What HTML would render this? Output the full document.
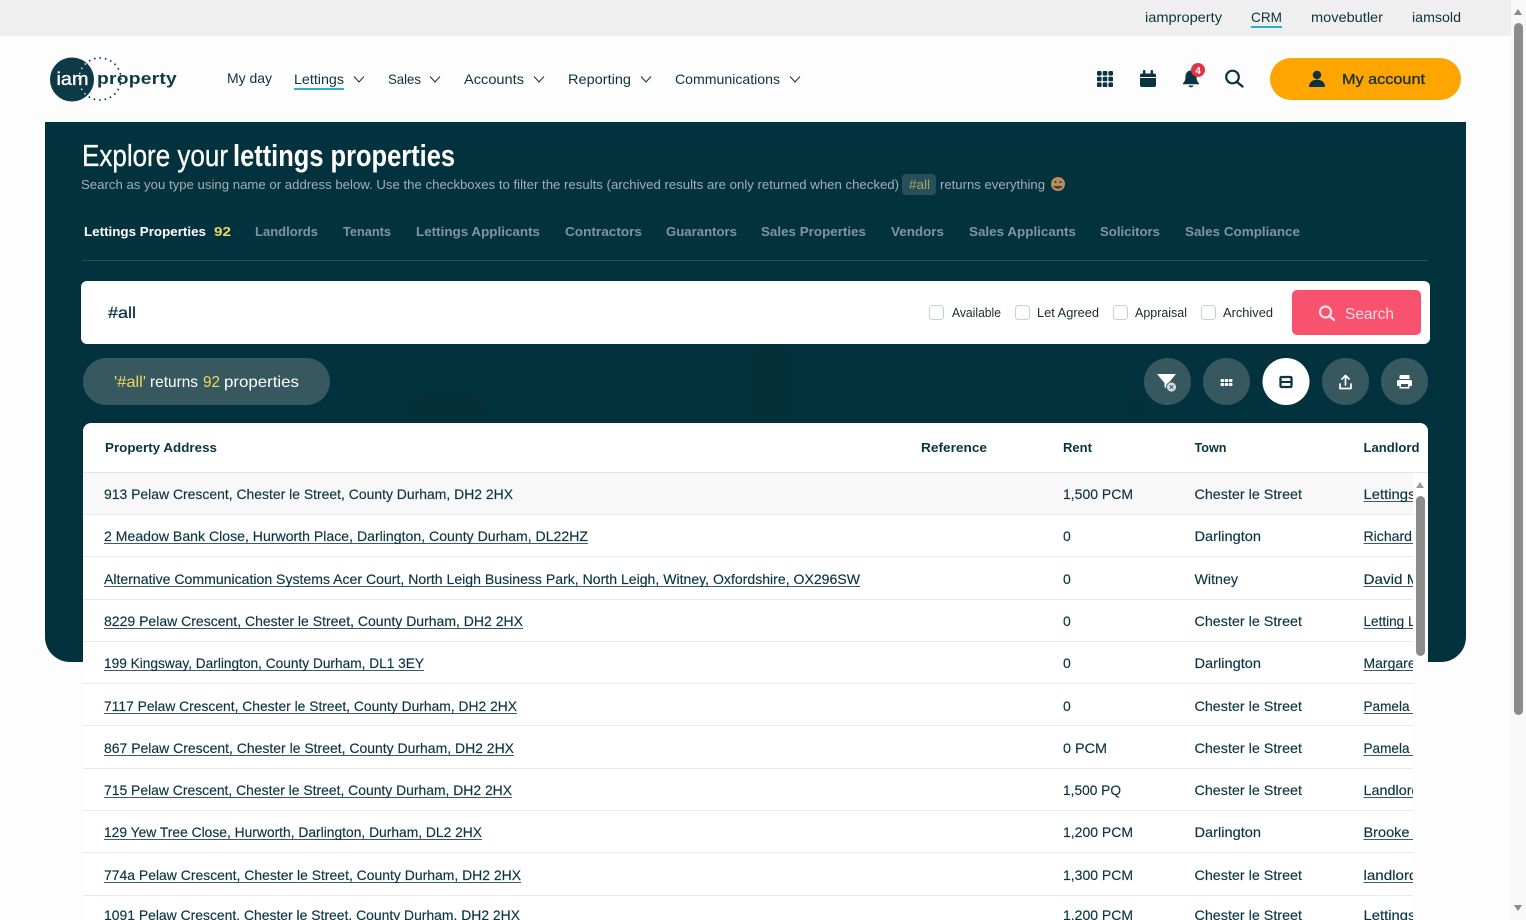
<!DOCTYPE html>
<html lang="en"><head><meta charset="utf-8"><title>Explore your lettings properties</title>
<style>
html,body{margin:0;padding:0;width:1526px;height:920px;overflow:hidden;background:#fdfdfd}
svg{display:block;position:absolute;left:0;top:0}
text{font-family:"Liberation Sans",sans-serif;fill:#0b3440}
.n{font-size:14px}
.t{font-size:13px;font-weight:bold;fill:#7e979e}
.h{font-size:13px;font-weight:bold}
.c{font-size:14px;stroke:#0b3440;stroke-width:.15px}
</style></head><body>
<svg width="1526" height="920" viewBox="0 0 1526 920" xmlns="http://www.w3.org/2000/svg">
<defs><clipPath id="cl"><rect x="83" y="473" width="1330" height="447"/></clipPath>
<clipPath id="lg"><circle cx="72" cy="79.500" r="22"/></clipPath></defs>
<rect x="0" y="0" width="1511" height="36" fill="#efefef"/>
<rect x="1511" y="0" width="15" height="920" fill="#f8f8f8"/>
<rect x="1514" y="23" width="9" height="692" rx="4.500" fill="#8c8c8c"/>
<path d="M1514 15l4-6 4 6z" fill="#8c8c8c"/><path d="M1514 905l4 6 4-6z" fill="#8c8c8c"/>

<text class="n" x="1145" y="22" textLength="77" lengthAdjust="spacingAndGlyphs">iamproperty</text>
<text class="n" x="1251" y="22" textLength="31" lengthAdjust="spacingAndGlyphs">CRM</text>
<rect x="1251" y="26" width="31" height="2" fill="#2ab0c8"/>
<text class="n" x="1311" y="22" textLength="72" lengthAdjust="spacingAndGlyphs">movebutler</text>
<text class="n" x="1412" y="22" textLength="49" lengthAdjust="spacingAndGlyphs">iamsold</text>

<!-- logo -->
<circle cx="100" cy="79" r="21" fill="none" stroke="#0d3a47" stroke-width="1.800" stroke-linecap="round" stroke-dasharray="0.1 5.400"/>
<circle cx="72" cy="79.500" r="22" fill="#0d3a47"/>
<circle cx="100" cy="79" r="21" fill="none" stroke="#fff" stroke-width="1.500" stroke-linecap="round" stroke-dasharray="0.1 5.400" clip-path="url(#lg)"/>
<text x="56.500" y="85" font-size="18" style="fill:#fff;stroke:#fff;stroke-width:.35px" textLength="32" lengthAdjust="spacingAndGlyphs">iam</text>
<text x="97" y="84" font-size="17" font-weight="bold" style="fill:#0d3a47;letter-spacing:.2px" textLength="80" lengthAdjust="spacingAndGlyphs">property</text>

<!-- nav -->
<text class="n" x="227" y="83" textLength="45" lengthAdjust="spacingAndGlyphs">My day</text>
<text class="n" x="294" y="84" textLength="50" lengthAdjust="spacingAndGlyphs">Lettings</text>
<rect x="294" y="88" width="50" height="2" fill="#2ab0c8"/>
<text class="n" x="388" y="84" textLength="33" lengthAdjust="spacingAndGlyphs">Sales</text>
<text class="n" x="464" y="84" textLength="60" lengthAdjust="spacingAndGlyphs">Accounts</text>
<text class="n" x="568" y="84" textLength="63" lengthAdjust="spacingAndGlyphs">Reporting</text>
<text class="n" x="675" y="84" textLength="105" lengthAdjust="spacingAndGlyphs">Communications</text>
<path fill="none" stroke="#0b3440" stroke-width="1" d="M354 76.500l5 5.500 5-5.500M430 76.500l5 5.500 5-5.500M534 76.500l5 5.500 5-5.500M641 76.500l5 5.500 5-5.500M790 76.500l5 5.500 5-5.500"/>

<!-- header icons -->
<g fill="#0b3440">
<rect x="1097" y="71" width="4.600" height="4.600" rx="1.300"/><rect x="1102.700" y="71" width="4.600" height="4.600" rx="1.300"/><rect x="1108.400" y="71" width="4.600" height="4.600" rx="1.300"/>
<rect x="1097" y="76.700" width="4.600" height="4.600" rx="1.300"/><rect x="1102.700" y="76.700" width="4.600" height="4.600" rx="1.300"/><rect x="1108.400" y="76.700" width="4.600" height="4.600" rx="1.300"/>
<rect x="1097" y="82.400" width="4.600" height="4.600" rx="1.300"/><rect x="1102.700" y="82.400" width="4.600" height="4.600" rx="1.300"/><rect x="1108.400" y="82.400" width="4.600" height="4.600" rx="1.300"/>
<path d="M1140 75.500a2 2 0 0 1 2-2h12a2 2 0 0 1 2 2v1.500h-16zM1140 78h16v7a2 2 0 0 1-2 2h-12a2 2 0 0 1-2-2z"/>
<rect x="1143" y="70" width="2.400" height="4.500" rx="1"/><rect x="1150.600" y="70" width="2.400" height="4.500" rx="1"/>
<path d="M1191 70.500c3.800 0 5.500 3 5.500 6.500 0 3.500 1.300 5 2.500 6.200v1h-16v-1c1.200-1.200 2.500-2.700 2.500-6.200 0-3.500 1.700-6.500 5.500-6.500zM1188.500 85.500h5a2.500 1.800 0 0 1-5 0z"/>
</g>
<circle cx="1198" cy="70" r="7" fill="#dd3446"/>
<text x="1195.300" y="73.800" font-size="10" font-weight="bold" style="fill:#fff">4</text>
<circle cx="1232.500" cy="77" r="6.300" fill="none" stroke="#0b3440" stroke-width="2.200"/>
<path d="M1237 82l5.500 4.500" stroke="#0b3440" stroke-width="2.400" stroke-linecap="round"/>
<rect x="1270" y="58" width="191" height="42" rx="21" fill="#ffa500"/>
<circle cx="1317" cy="75" r="4.200" fill="#0b3440"/>
<path d="M1309 87c0-5 3.500-7.200 8-7.200s8 2.200 8 7.200z" fill="#0b3440"/>
<text x="1342" y="84" font-size="15" style="fill:#1b3432;stroke:#1b3432;stroke-width:.35px" textLength="83" lengthAdjust="spacingAndGlyphs">My account</text>

<!-- panel -->
<path d="M45 122H1466V637a25 25 0 0 1-25 25H70a25 25 0 0 1-25-25z" fill="#03323f"/>
<path d="M400 423c0-22 20-33 45-33s45 11 45 33zM750 423V350h6v-14h30v14h6v73zM1120 423l15-40 15 40z" fill="#033039"/>

<text x="82" y="166" font-size="31" style="fill:#fff;stroke:#fff;stroke-width:.3px" textLength="146" lengthAdjust="spacingAndGlyphs">Explore your</text>
<text x="233" y="166" font-size="31" font-weight="bold" style="fill:#fff" textLength="222" lengthAdjust="spacingAndGlyphs">lettings properties</text>
<text x="81" y="189" font-size="13" style="fill:#9fb0b6" textLength="818" lengthAdjust="spacingAndGlyphs">Search as you type using name or address below. Use the checkboxes to filter the results (archived results are only returned when checked)</text>
<rect x="902" y="174" width="34" height="21" rx="4" fill="#28505a"/>
<text x="909" y="189" font-size="13" style="fill:#a8a860" textLength="21" lengthAdjust="spacingAndGlyphs">#all</text>
<text x="940" y="189" font-size="13" style="fill:#9fb0b6" textLength="105" lengthAdjust="spacingAndGlyphs">returns everything</text>
<circle cx="1058" cy="184" r="7" fill="#b58e5e"/>
<path d="M1053.500 186c1.500 3.500 7.500 3.500 9 0z" fill="#4d3a26"/><circle cx="1055.500" cy="182" r="1.100" fill="#4d3a26"/><circle cx="1060.500" cy="182" r="1.100" fill="#4d3a26"/>

<text class="t" x="84" y="236" style="fill:#fff" textLength="122" lengthAdjust="spacingAndGlyphs">Lettings Properties</text>
<text class="t" x="214" y="236" style="fill:#f1d55c" textLength="17" lengthAdjust="spacingAndGlyphs">92</text>
<text class="t" x="255" y="236" textLength="63" lengthAdjust="spacingAndGlyphs">Landlords</text>
<text class="t" x="343" y="236" textLength="48" lengthAdjust="spacingAndGlyphs">Tenants</text>
<text class="t" x="416" y="236" textLength="124" lengthAdjust="spacingAndGlyphs">Lettings Applicants</text>
<text class="t" x="565" y="236" textLength="77" lengthAdjust="spacingAndGlyphs">Contractors</text>
<text class="t" x="666" y="236" textLength="71" lengthAdjust="spacingAndGlyphs">Guarantors</text>
<text class="t" x="761" y="236" textLength="105" lengthAdjust="spacingAndGlyphs">Sales Properties</text>
<text class="t" x="891" y="236" textLength="53" lengthAdjust="spacingAndGlyphs">Vendors</text>
<text class="t" x="969" y="236" textLength="107" lengthAdjust="spacingAndGlyphs">Sales Applicants</text>
<text class="t" x="1100" y="236" textLength="60" lengthAdjust="spacingAndGlyphs">Solicitors</text>
<text class="t" x="1185" y="236" textLength="115" lengthAdjust="spacingAndGlyphs">Sales Compliance</text>
<rect x="82" y="260" width="1346" height="1" fill="#28505a"/>

<!-- search -->
<rect x="81" y="281" width="1349" height="63" rx="6" fill="#fff"/>
<text x="108" y="318" font-size="16" textLength="28" lengthAdjust="spacingAndGlyphs" style="stroke:#0b3440;stroke-width:.25px">#all</text>
<g fill="#fff" stroke="#c9cfd2">
<rect x="929.500" y="305.500" width="14" height="14" rx="3"/><rect x="1015.500" y="305.500" width="14" height="14" rx="3"/><rect x="1113.500" y="305.500" width="14" height="14" rx="3"/><rect x="1201.500" y="305.500" width="14" height="14" rx="3"/>
</g>
<text x="952" y="317" font-size="13" style="fill:#1a2b30" textLength="49" lengthAdjust="spacingAndGlyphs">Available</text>
<text x="1037" y="317" font-size="13" style="fill:#1a2b30" textLength="62" lengthAdjust="spacingAndGlyphs">Let Agreed</text>
<text x="1135" y="317" font-size="13" style="fill:#1a2b30" textLength="52" lengthAdjust="spacingAndGlyphs">Appraisal</text>
<text x="1223" y="317" font-size="13" style="fill:#1a2b30" textLength="50" lengthAdjust="spacingAndGlyphs">Archived</text>
<rect x="1292" y="290" width="129" height="45" rx="5" fill="#f8526e"/>
<circle cx="1325.500" cy="312" r="5.500" fill="none" stroke="#ffe3e8" stroke-width="2.200"/>
<path d="M1329.500 316l4.500 4" stroke="#ffe3e8" stroke-width="2.400" stroke-linecap="round"/>
<text x="1345" y="319" font-size="16" style="fill:#ffdbe1" textLength="49" lengthAdjust="spacingAndGlyphs">Search</text>

<!-- pill -->
<rect x="83" y="358" width="247" height="47" rx="23.500" fill="#37585f"/>
<text x="114" y="387" font-size="16" style="fill:#f1d55c" textLength="32" lengthAdjust="spacingAndGlyphs">'#all'</text>
<text x="150" y="387" font-size="16" style="fill:#fff" textLength="48" lengthAdjust="spacingAndGlyphs">returns</text>
<text x="203" y="387" font-size="16" style="fill:#f1d55c" textLength="17" lengthAdjust="spacingAndGlyphs">92</text>
<text x="224" y="387" font-size="16" style="fill:#fff" textLength="75" lengthAdjust="spacingAndGlyphs">properties</text>

<!-- round buttons -->
<circle cx="1167.500" cy="381.500" r="23.500" fill="#37585f"/>
<circle cx="1226.500" cy="381.500" r="23.500" fill="#37585f"/>
<circle cx="1286" cy="381.500" r="23.500" fill="#fff"/>
<circle cx="1345.500" cy="381.500" r="23.500" fill="#37585f"/>
<circle cx="1404.500" cy="381.500" r="23.500" fill="#37585f"/>
<path d="M1157 374h19l-7.500 9v7l-4-3v-4z" fill="#fff"/>
<circle cx="1171.500" cy="387" r="5" fill="#cfd8da" stroke="#37585f" stroke-width="0.800"/>
<path d="M1169.800 385.300l3.400 3.400M1173.200 385.300l-3.400 3.400" stroke="#37585f" stroke-width="1"/>
<g fill="#fff">
<rect x="1220.500" y="379" width="3.600" height="3" rx="1"/><rect x="1224.700" y="379" width="3.600" height="3" rx="1"/><rect x="1228.900" y="379" width="3.600" height="3" rx="1"/>
<rect x="1220.500" y="383" width="3.600" height="3" rx="1"/><rect x="1224.700" y="383" width="3.600" height="3" rx="1"/><rect x="1228.900" y="383" width="3.600" height="3" rx="1"/>
</g>
<rect x="1280.500" y="377" width="11" height="10" rx="1" fill="none" stroke="#0b3440" stroke-width="2.300"/>
<rect x="1280" y="381" width="12" height="2" fill="#0b3440"/>
<path d="M1345.500 385v-9M1342 379l3.500-3.500 3.500 3.500M1340 384v4.500h11V384" fill="none" stroke="#fff" stroke-width="1.700" stroke-linecap="round" stroke-linejoin="round"/>
<path d="M1400.500 375h8a1 1 0 0 1 1 1v3h-10v-3a1 1 0 0 1 1-1zM1398.500 380h12a1.500 1.500 0 0 1 1.500 1.500v4.500h-2.500v2.500h-10v-2.500h-2.500v-4.500a1.500 1.500 0 0 1 1.500-1.500z" fill="#fff"/>
<rect x="1401" y="384" width="7" height="3" fill="#37585f"/>

<!-- table -->
<path d="M83 431a8 8 0 0 1 8-8H1420a8 8 0 0 1 8 8V662H1413V920H83z" fill="#fff"/>
<text class="h" x="105" y="452" textLength="112" lengthAdjust="spacingAndGlyphs">Property Address</text>
<text class="h" x="921" y="452" textLength="66" lengthAdjust="spacingAndGlyphs">Reference</text>
<text class="h" x="1063" y="452" textLength="29" lengthAdjust="spacingAndGlyphs">Rent</text>
<text class="h" x="1194.500" y="452" textLength="32" lengthAdjust="spacingAndGlyphs">Town</text>
<text class="h" x="1363.500" y="452" textLength="56" lengthAdjust="spacingAndGlyphs">Landlord</text>
<rect x="83" y="472" width="1345" height="1" fill="#e2e4e5"/>
<rect x="83" y="473" width="1330" height="41" fill="#f8f8f8"/>
<g fill="#e8e9ea">
<rect x="83" y="514" width="1330" height="1"/><rect x="83" y="556" width="1330" height="1"/><rect x="83" y="599" width="1330" height="1"/><rect x="83" y="641" width="1330" height="1"/><rect x="83" y="683" width="1330" height="1"/><rect x="83" y="725" width="1330" height="1"/><rect x="83" y="768" width="1330" height="1"/><rect x="83" y="810" width="1330" height="1"/><rect x="83" y="852" width="1330" height="1"/><rect x="83" y="895" width="1330" height="1"/>
</g>
<path d="M1416 488l4-6 4 6z" fill="#9a9a9a"/>
<rect x="1416" y="496" width="9" height="160" rx="4.500" fill="#8c8c8c"/>

<!-- underlines -->
<g fill="#3d5c66">
<rect x="104" y="543" width="484" height="1"/><rect x="104" y="586" width="756" height="1"/><rect x="104" y="628" width="419" height="1"/><rect x="104" y="670" width="320" height="1"/><rect x="104" y="713" width="413" height="1"/><rect x="104" y="755" width="410" height="1"/><rect x="104" y="797" width="408" height="1"/><rect x="104" y="839" width="378" height="1"/><rect x="104" y="882" width="417" height="1"/>
<rect x="1363.500" y="501" width="49.500" height="1"/><rect x="1363.500" y="543" width="49.500" height="1"/><rect x="1363.500" y="586" width="49.500" height="1"/><rect x="1363.500" y="628" width="49.500" height="1"/><rect x="1363.500" y="670" width="49.500" height="1"/><rect x="1363.500" y="713" width="49.500" height="1"/><rect x="1363.500" y="755" width="49.500" height="1"/><rect x="1363.500" y="797" width="49.500" height="1"/><rect x="1363.500" y="839" width="49.500" height="1"/><rect x="1363.500" y="882" width="49.500" height="1"/>
</g>

<g clip-path="url(#cl)">
<text class="c" x="104" y="499" textLength="409" lengthAdjust="spacingAndGlyphs">913 Pelaw Crescent, Chester le Street, County Durham, DH2 2HX</text>
<text class="c" x="1063" y="499" textLength="70" lengthAdjust="spacingAndGlyphs">1,500 PCM</text>
<text class="c" x="1194.500" y="499" textLength="107.500" lengthAdjust="spacingAndGlyphs">Chester le Street</text>
<text class="c" x="1363.500" y="499" textLength="52" lengthAdjust="spacingAndGlyphs">Lettings</text>

<text class="c" x="104" y="541" textLength="484" lengthAdjust="spacingAndGlyphs">2 Meadow Bank Close, Hurworth Place, Darlington, County Durham, DL22HZ</text>
<text class="c" x="1063" y="541">0</text>
<text class="c" x="1194.500" y="541" textLength="66.500" lengthAdjust="spacingAndGlyphs">Darlington</text>
<text class="c" x="1363.500" y="541" textLength="48.500" lengthAdjust="spacingAndGlyphs">Richard</text>

<text class="c" x="104" y="584" textLength="756" lengthAdjust="spacingAndGlyphs">Alternative Communication Systems Acer Court, North Leigh Business Park, North Leigh, Witney, Oxfordshire, OX296SW</text>
<text class="c" x="1063" y="584">0</text>
<text class="c" x="1194.500" y="584" textLength="43.500" lengthAdjust="spacingAndGlyphs">Witney</text>
<text class="c" x="1363.500" y="584" textLength="56" lengthAdjust="spacingAndGlyphs">David M</text>

<text class="c" x="104" y="626" textLength="419" lengthAdjust="spacingAndGlyphs">8229 Pelaw Crescent, Chester le Street, County Durham, DH2 2HX</text>
<text class="c" x="1063" y="626">0</text>
<text class="c" x="1194.500" y="626" textLength="107.500" lengthAdjust="spacingAndGlyphs">Chester le Street</text>
<text class="c" x="1363.500" y="626" textLength="52" lengthAdjust="spacingAndGlyphs">Letting L</text>

<text class="c" x="104" y="668" textLength="320" lengthAdjust="spacingAndGlyphs">199 Kingsway, Darlington, County Durham, DL1 3EY</text>
<text class="c" x="1063" y="668">0</text>
<text class="c" x="1194.500" y="668" textLength="66.500" lengthAdjust="spacingAndGlyphs">Darlington</text>
<text class="c" x="1363.500" y="668" textLength="56" lengthAdjust="spacingAndGlyphs">Margaret</text>

<text class="c" x="104" y="711" textLength="413" lengthAdjust="spacingAndGlyphs">7117 Pelaw Crescent, Chester le Street, County Durham, DH2 2HX</text>
<text class="c" x="1063" y="711">0</text>
<text class="c" x="1194.500" y="711" textLength="107.500" lengthAdjust="spacingAndGlyphs">Chester le Street</text>
<text class="c" x="1363.500" y="711" textLength="46" lengthAdjust="spacingAndGlyphs">Pamela</text>

<text class="c" x="104" y="753" textLength="410" lengthAdjust="spacingAndGlyphs">867 Pelaw Crescent, Chester le Street, County Durham, DH2 2HX</text>
<text class="c" x="1063" y="753" textLength="44" lengthAdjust="spacingAndGlyphs">0 PCM</text>
<text class="c" x="1194.500" y="753" textLength="107.500" lengthAdjust="spacingAndGlyphs">Chester le Street</text>
<text class="c" x="1363.500" y="753" textLength="46" lengthAdjust="spacingAndGlyphs">Pamela</text>

<text class="c" x="104" y="795" textLength="408" lengthAdjust="spacingAndGlyphs">715 Pelaw Crescent, Chester le Street, County Durham, DH2 2HX</text>
<text class="c" x="1063" y="795" textLength="58" lengthAdjust="spacingAndGlyphs">1,500 PQ</text>
<text class="c" x="1194.500" y="795" textLength="107.500" lengthAdjust="spacingAndGlyphs">Chester le Street</text>
<text class="c" x="1363.500" y="795" textLength="56" lengthAdjust="spacingAndGlyphs">Landlord</text>

<text class="c" x="104" y="837" textLength="378" lengthAdjust="spacingAndGlyphs">129 Yew Tree Close, Hurworth, Darlington, Durham, DL2 2HX</text>
<text class="c" x="1063" y="837" textLength="70" lengthAdjust="spacingAndGlyphs">1,200 PCM</text>
<text class="c" x="1194.500" y="837" textLength="66.500" lengthAdjust="spacingAndGlyphs">Darlington</text>
<text class="c" x="1363.500" y="837" textLength="46" lengthAdjust="spacingAndGlyphs">Brooke</text>

<text class="c" x="104" y="880" textLength="417" lengthAdjust="spacingAndGlyphs">774a Pelaw Crescent, Chester le Street, County Durham, DH2 2HX</text>
<text class="c" x="1063" y="880" textLength="70" lengthAdjust="spacingAndGlyphs">1,300 PCM</text>
<text class="c" x="1194.500" y="880" textLength="107.500" lengthAdjust="spacingAndGlyphs">Chester le Street</text>
<text class="c" x="1363.500" y="880" textLength="54" lengthAdjust="spacingAndGlyphs">landlord</text>

<text class="c" x="104" y="920" textLength="416" lengthAdjust="spacingAndGlyphs">1091 Pelaw Crescent, Chester le Street, County Durham, DH2 2HX</text>
<text class="c" x="1063" y="920" textLength="70" lengthAdjust="spacingAndGlyphs">1,200 PCM</text>
<text class="c" x="1194.500" y="920" textLength="107.500" lengthAdjust="spacingAndGlyphs">Chester le Street</text>
<text class="c" x="1363.500" y="920" textLength="52" lengthAdjust="spacingAndGlyphs">Lettings</text>
</g>
</svg>
</body></html>
